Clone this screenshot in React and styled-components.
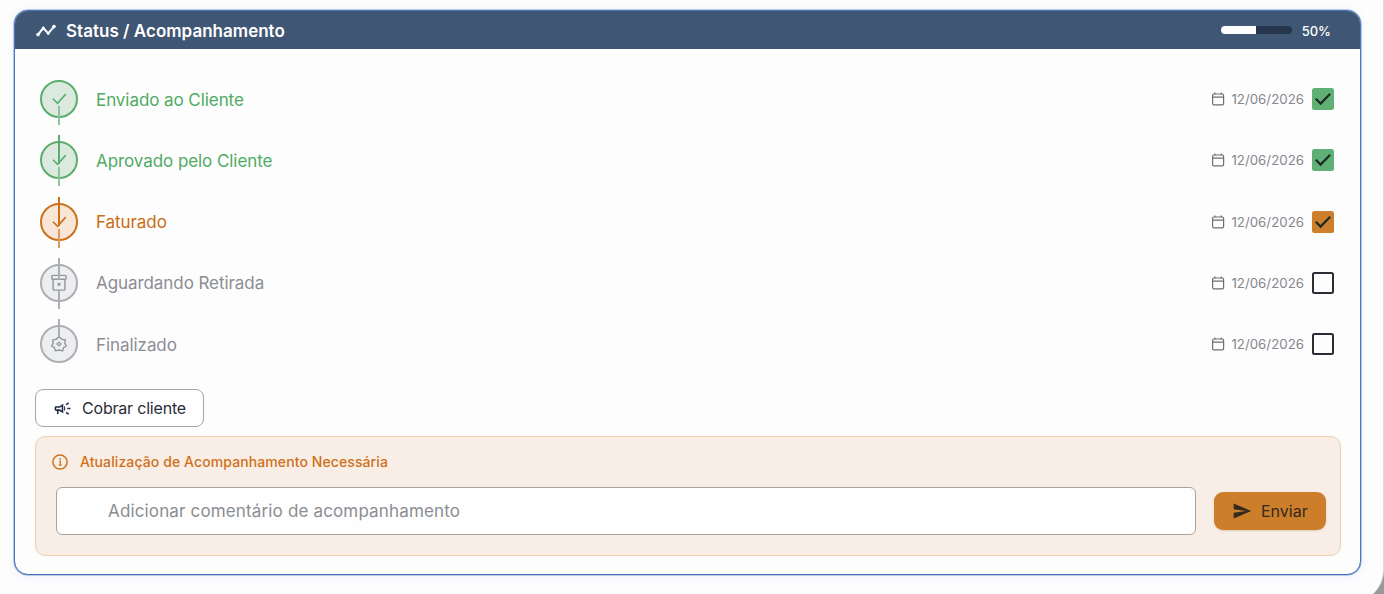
import React, { useState } from 'react';
import styled, { createGlobalStyle } from 'styled-components';
import { MdOutlineCampaign, MdSend } from 'react-icons/md';

const colors = {
	orange: '#cf701a',
	dark: '#2b2d36',
	icon: '#94969c',
};

const tones = {
	green: { text: '#4dab62', ring: '#5aad6c', fill: '#dbe9df', tail: '#8cc59a', box: '#60b075' },
	orange: { text: '#cb6c14', ring: '#cb711c', fill: '#fae6d6', tail: '#dd9a5c', box: '#cd7f2c' },
	grey: { text: '#8b8d94', ring: '#adaeb3', fill: '#edeef0', tail: '#adaeb3', box: 'transparent' },
};

// how far the upper connector runs down into each icon
const lineHeights = { check: 29, box: 22, badge: 18 };

const initialSteps = [
	{ id: 1, label: 'Enviado ao Cliente', tone: 'green', icon: 'check', date: '12/06/2026', done: true },
	{ id: 2, label: 'Aprovado pelo Cliente', tone: 'green', icon: 'check', date: '12/06/2026', done: true },
	{ id: 3, label: 'Faturado', tone: 'orange', icon: 'check', date: '12/06/2026', done: true },
	{ id: 4, label: 'Aguardando Retirada', tone: 'grey', icon: 'box', date: '12/06/2026', done: false },
	{ id: 5, label: 'Finalizado', tone: 'grey', icon: 'badge', date: '12/06/2026', done: false },
];

const TimelineIcon = () => (
	<svg width="20" height="14" viewBox="0 0 20 14" fill="none">
		<path d="M2 10.6 7.3 4 12.2 9.4 18 2.6" stroke="#fff" strokeWidth="2" strokeLinejoin="round" />
		<circle cx="2" cy="10.6" r="1.8" fill="#fff" />
		<circle cx="7.3" cy="4" r="1.4" fill="#fff" />
		<circle cx="12.2" cy="9.4" r="1.4" fill="#fff" />
		<circle cx="18" cy="2.6" r="1.8" fill="#fff" />
	</svg>
);

const CalendarIcon = () => (
	<svg width="14" height="14" viewBox="0 0 14 14" fill="none" stroke="#6c6e74" strokeWidth="1.2">
		<rect x="1.6" y="2" width="11" height="10.8" rx="1.4" />
		<path d="M1.6 5.2h11M3.9 .4v1.8M10.3 .4v1.8" />
	</svg>
);

const InfoIcon = () => (
	<svg width="16" height="16" viewBox="0 0 16 16" fill="none" stroke={colors.orange}>
		<circle cx="8" cy="8" r="7.1" strokeWidth="1.5" />
		<path d="M7 7.3h1.3v3.8M6.8 11.2h2.8" strokeWidth="1.2" />
		<circle cx="8.1" cy="4.9" r=".9" fill={colors.orange} stroke="none" />
	</svg>
);

const StepIcon = ({ icon, color }) => {
	if (icon === 'check') {
		return (
			<svg width="18" height="18" viewBox="0 0 18 18" fill="none">
				<path d="m2.9 8.7 4.7 4.6 8.1-9.2" stroke={color} strokeWidth="1.6" />
			</svg>
		);
	}
	if (icon === 'box') {
		return (
			<svg width="18" height="18" viewBox="0 0 18 18" fill="none" stroke={colors.icon} strokeWidth="1.4">
				<rect x="1.8" y="1.4" width="14.4" height="3.8" rx="1" />
				<path d="M3.1 5.2v10q0 .9.9.9h10q.9 0 .9-.9v-10" />
				<rect x="7.6" y="8.9" width="2.8" height="2.8" fill={colors.icon} stroke="none" />
			</svg>
		);
	}
	return (
		<svg width="18" height="18" viewBox="0 0 18 18" fill="none" stroke={colors.icon} strokeWidth="1.4">
			<path
				d="M9 1.5 11.7 4.3 15.4 4.9 14.8 8.3 16.4 11 13.6 12.7 12.7 15.9 9 15 5.3 15.9 4.4 12.7 1.6 11 3.2 8.3 2.6 4.9 6.3 4.3z"
				strokeLinejoin="round"
			/>
			<path d="m9 7.1 2 1.9-2 2-2-2z" strokeWidth="1.2" />
		</svg>
	);
};

const App = () => {
	const [steps, setSteps] = useState(initialSteps);
	const [comment, setComment] = useState('');

	const toggle = (id) =>
		setSteps(steps.map((step) => (step.id === id ? { ...step, done: !step.done } : step)));

	return (
		<Backdrop>
			<GlobalStyle />
			<Page>
				<Panel>
					<Header>
						<TimelineIcon />
						<Title>Status / Acompanhamento</Title>
						<Progress>
							<ProgressBar />
						</Progress>
						<Percent>50%</Percent>
					</Header>
					<StepList>
						{steps.map((step, index) => (
							<Step key={step.id}>
								<Marker
									$tone={tones[step.tone]}
									$line={lineHeights[step.icon]}
									$first={index === 0}
									$last={index === steps.length - 1}
								>
									<StepIcon icon={step.icon} color={tones[step.tone].ring} />
								</Marker>
								<StepLabel $tone={tones[step.tone]}>{step.label}</StepLabel>
								<CalendarIcon />
								<StepDate>{step.date}</StepDate>
								<CheckBox
									$tone={tones[step.tone]}
									$done={step.done}
									onClick={() => toggle(step.id)}
								>
									{step.done && (
										<svg width="22" height="22" viewBox="0 0 22 22" fill="none">
											<path d="m3.8 10.8 4.8 4.8 9.6-9.8" stroke="#1d2b26" strokeWidth="2.2" />
										</svg>
									)}
								</CheckBox>
							</Step>
						))}
					</StepList>
					<ChargeButton>
						<MdOutlineCampaign size={19} color="#1f2848" />
						Cobrar cliente
					</ChargeButton>
					<Notice>
						<NoticeTitle>
							<InfoIcon />
							Atualização de Acompanhamento Necessária
						</NoticeTitle>
						<CommentRow>
							<CommentInput
								value={comment}
								onChange={(e) => setComment(e.target.value)}
								placeholder="Adicionar comentário de acompanhamento"
							/>
							<SendButton>
								<MdSend size={20} />
								Enviar
							</SendButton>
						</CommentRow>
					</Notice>
				</Panel>
			</Page>
		</Backdrop>
	);
};

const GlobalStyle = createGlobalStyle`
	* {
		box-sizing: border-box;
	}
	body {
		margin: 0;
		font-family: Inter, 'Liberation Sans', sans-serif;
	}
	svg {
		flex: none;
		display: block;
	}
`;

const Backdrop = styled.div`
	height: 594px;
	overflow: hidden;
	background: #98989a;
`;

const Page = styled.div`
	height: 602px;
	padding: 10px 22px 0 14px;
	border-right: 1px solid #dcdde0;
	border-bottom-right-radius: 32px;
	background: #fdfdfe;
`;

const Panel = styled.section`
	height: 565px;
	border: 1px solid #4a73b9;
	border-radius: 14px;
	overflow: hidden;
	background: #fdfdfd;
	box-shadow: 0 0 0 0.5px #7c9bd0, 0 1px 8px rgba(70, 110, 190, 0.1);
`;

const Header = styled.header`
	height: 38px;
	padding: 1px 29px 0 21px;
	display: flex;
	align-items: center;
	background: #3f5674;
	color: #fff;
`;

const Title = styled.h1`
	margin: 0 auto 0 10px;
	font-size: 17px;
	font-weight: 600;
	letter-spacing: 0.02px;
`;

const Progress = styled.div`
	width: 71px;
	height: 8px;
	margin: 0 10px 2px 0;
	border-radius: 4px;
	overflow: hidden;
	background: #26374d;
`;

const ProgressBar = styled.div`
	width: 50%;
	height: 100%;
	background: #fff;
`;

const Percent = styled.span`
	font-size: 13px;
	font-weight: 500;
`;

const StepList = styled.div`
	padding: 19.4px 26px 0 25px;
`;

const Step = styled.div`
	height: 61.3px;
	display: flex;
	align-items: center;
`;

const Marker = styled.div`
	position: relative;
	width: 38px;
	height: 38px;
	margin-right: 18px;
	display: flex;
	align-items: center;
	justify-content: center;
	border: 2px solid ${(props) => props.$tone.ring};
	border-radius: 50%;
	background: ${(props) => props.$tone.fill};

	&::before,
	&::after {
		content: '';
		position: absolute;
		left: 16px;
		width: 2px;
	}
	&::before {
		display: ${(props) => (props.$first ? 'none' : 'block')};
		top: -8px;
		height: ${(props) => props.$line}px;
		background: ${(props) => props.$tone.ring};
	}
	&::after {
		display: ${(props) => (props.$last ? 'none' : 'block')};
		bottom: -9px;
		height: 19px;
		background: ${(props) => props.$tone.tail};
	}
`;

const StepLabel = styled.span`
	margin-right: auto;
	padding-top: 1px;
	font-size: 17px;
	letter-spacing: -0.07px;
	color: ${(props) => props.$tone.text};
`;

const StepDate = styled.span`
	margin: 0 8px 0 6px;
	font-size: 13.3px;
	color: #85878d;
`;

const CheckBox = styled.button`
	width: 22px;
	height: 22px;
	padding: 0;
	display: flex;
	align-items: center;
	justify-content: center;
	border: ${(props) => (props.$done ? 'none' : `2px solid ${colors.dark}`)};
	border-radius: 2.5px;
	background: ${(props) => (props.$done ? props.$tone.box : 'transparent')};
`;

const ChargeButton = styled.button`
	width: 169px;
	height: 38px;
	margin: 14.1px 0 9px 20px;
	padding: 1px 0 0 17px;
	display: flex;
	align-items: center;
	gap: 10px;
	border: 1px solid #a4a5aa;
	border-radius: 8px;
	background: #fefefe;
	font: 400 16px Inter, sans-serif;
	letter-spacing: -0.2px;
	color: ${colors.dark};
`;

const Notice = styled.div`
	height: 120px;
	margin: 0 19px 0 20px;
	padding: 16px 14px 0 16px;
	border: 1px solid #efcfae;
	border-radius: 10px;
	background: #f8eee6;
`;

const NoticeTitle = styled.div`
	height: 18px;
	display: flex;
	align-items: center;
	gap: 12px;
	font-size: 14px;
	font-weight: 500;
	letter-spacing: 0.1px;
	color: ${colors.orange};
`;

const CommentRow = styled.div`
	margin: 16px 0 0 4px;
	display: flex;
	align-items: center;
	gap: 18px;
`;

const CommentInput = styled.input`
	flex: 1;
	min-width: 0;
	height: 48px;
	padding: 1px 51px 0;
	border: 1px solid #a8a39f;
	border-radius: 6px;
	outline: none;
	background: #fefefe;
	font: 400 17px Inter, sans-serif;
	letter-spacing: 0.15px;

	&::placeholder {
		color: #8b8d93;
	}
`;

const SendButton = styled.button`
	width: 112px;
	height: 38px;
	padding: 0 0 0 18px;
	display: flex;
	align-items: center;
	gap: 9px;
	border: none;
	border-radius: 9px;
	background: #cd7e2a;
	box-shadow: 0 1px 2px rgba(120, 70, 20, 0.2);
	font: 400 16px Inter, sans-serif;
	color: #33291d;
`;

export default App;
